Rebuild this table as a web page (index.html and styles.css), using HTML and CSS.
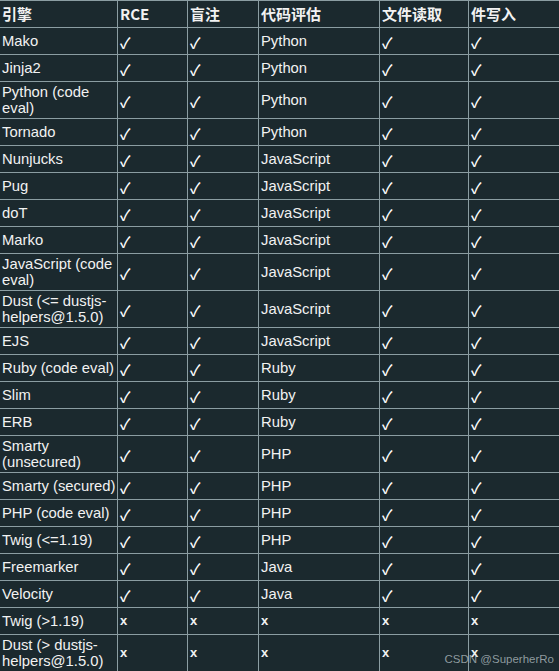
FILE: index.html
```html
<!DOCTYPE html>
<html lang="zh">
<head>
<meta charset="utf-8">
<title>SSTI 引擎</title>
<link rel="stylesheet" href="styles.css">
</head>
<body>
<div class="page">
<table class="grid">
  <colgroup>
    <col class="c1"><col class="c2"><col class="c3"><col class="c4"><col class="c5"><col class="c6">
  </colgroup>
  <thead>
    <tr><th>引擎</th><th>RCE</th><th>盲注</th><th>代码评估</th><th>文件读取</th><th>件写入</th></tr>
  </thead>
  <tbody>
    <tr><td>Mako</td><td class="ok">✓</td><td class="ok">✓</td><td>Python</td><td class="ok">✓</td><td class="ok">✓</td></tr>
    <tr><td>Jinja2</td><td class="ok">✓</td><td class="ok">✓</td><td>Python</td><td class="ok">✓</td><td class="ok">✓</td></tr>
    <tr><td>Python (code eval)</td><td class="ok">✓</td><td class="ok">✓</td><td>Python</td><td class="ok">✓</td><td class="ok">✓</td></tr>
    <tr><td>Tornado</td><td class="ok">✓</td><td class="ok">✓</td><td>Python</td><td class="ok">✓</td><td class="ok">✓</td></tr>
    <tr><td>Nunjucks</td><td class="ok">✓</td><td class="ok">✓</td><td>JavaScript</td><td class="ok">✓</td><td class="ok">✓</td></tr>
    <tr><td>Pug</td><td class="ok">✓</td><td class="ok">✓</td><td>JavaScript</td><td class="ok">✓</td><td class="ok">✓</td></tr>
    <tr><td>doT</td><td class="ok">✓</td><td class="ok">✓</td><td>JavaScript</td><td class="ok">✓</td><td class="ok">✓</td></tr>
    <tr><td>Marko</td><td class="ok">✓</td><td class="ok">✓</td><td>JavaScript</td><td class="ok">✓</td><td class="ok">✓</td></tr>
    <tr><td>JavaScript (code eval)</td><td class="ok">✓</td><td class="ok">✓</td><td>JavaScript</td><td class="ok">✓</td><td class="ok">✓</td></tr>
    <tr><td>Dust (&lt;= dustjs-helpers@1.5.0)</td><td class="ok">✓</td><td class="ok">✓</td><td>JavaScript</td><td class="ok">✓</td><td class="ok">✓</td></tr>
    <tr><td>EJS</td><td class="ok">✓</td><td class="ok">✓</td><td>JavaScript</td><td class="ok">✓</td><td class="ok">✓</td></tr>
    <tr><td>Ruby (code eval)</td><td class="ok">✓</td><td class="ok">✓</td><td>Ruby</td><td class="ok">✓</td><td class="ok">✓</td></tr>
    <tr><td>Slim</td><td class="ok">✓</td><td class="ok">✓</td><td>Ruby</td><td class="ok">✓</td><td class="ok">✓</td></tr>
    <tr><td>ERB</td><td class="ok">✓</td><td class="ok">✓</td><td>Ruby</td><td class="ok">✓</td><td class="ok">✓</td></tr>
    <tr><td>Smarty (unsecured)</td><td class="ok">✓</td><td class="ok">✓</td><td>PHP</td><td class="ok">✓</td><td class="ok">✓</td></tr>
    <tr><td>Smarty (secured)</td><td class="ok">✓</td><td class="ok">✓</td><td>PHP</td><td class="ok">✓</td><td class="ok">✓</td></tr>
    <tr><td>PHP (code eval)</td><td class="ok">✓</td><td class="ok">✓</td><td>PHP</td><td class="ok">✓</td><td class="ok">✓</td></tr>
    <tr><td>Twig (&lt;=1.19)</td><td class="ok">✓</td><td class="ok">✓</td><td>PHP</td><td class="ok">✓</td><td class="ok">✓</td></tr>
    <tr><td>Freemarker</td><td class="ok">✓</td><td class="ok">✓</td><td>Java</td><td class="ok">✓</td><td class="ok">✓</td></tr>
    <tr><td>Velocity</td><td class="ok">✓</td><td class="ok">✓</td><td>Java</td><td class="ok">✓</td><td class="ok">✓</td></tr>
    <tr><td>Twig (&gt;1.19)</td><td class="no">x</td><td class="no">x</td><td class="no">x</td><td class="no">x</td><td class="no">x</td></tr>
    <tr><td>Dust (&gt; dustjs-helpers@1.5.0)</td><td class="no">x</td><td class="no">x</td><td class="no">x</td><td class="no">x</td><td class="no">x</td></tr>
  </tbody>
</table>
<div class="watermark">CSDN @SuperherRo</div>
</div>
</body>
</html>
```

FILE: styles.css
```css
html, body {
  margin: 0;
  padding: 0;
  background: #1b292e;
  overflow: hidden;
}

.page {
  position: relative;
  width: 559px;
  height: 671px;
  overflow: hidden;
}

.grid {
  border-collapse: collapse;
  table-layout: fixed;
  width: 640px;
  margin-left: -1px;
  color: #f2f2f2;
  font-family: "Liberation Sans", Arial, "Noto Sans CJK SC", sans-serif;
  font-size: 14.8px;
  line-height: 16px;
}

.c1 { width: 118px; }
.c2 { width: 70px; }
.c3 { width: 71px; }
.c4 { width: 121px; }
.c5 { width: 89px; }
.c6 { width: 171px; }

.grid th,
.grid td {
  border: 1px solid #8b9da2;
  padding: 2px 0 2px 2px;
  text-align: left;
  vertical-align: middle;
  overflow: hidden;
}

.grid tr {
  height: 27px;
}

.grid th {
  font-family: "Noto Sans CJK SC", "Liberation Sans", sans-serif;
  font-weight: 700;
  font-size: 15px;
}

.grid td.ok {
  font-family: "Noto Sans CJK SC", "DejaVu Sans", sans-serif;
  font-weight: 500;
  font-size: 15px;
  color: #ffffff;
  padding: 4px 0 0 2px;
}

.grid td.no {
  font-family: "Liberation Sans", Arial, sans-serif;
  font-weight: 700;
  font-size: 13px;
}

.watermark {
  position: absolute;
  right: 5px;
  bottom: 6px;
  font-family: "Liberation Sans", Arial, sans-serif;
  font-size: 11.5px;
  color: rgba(190, 200, 204, 0.72);
}
```
